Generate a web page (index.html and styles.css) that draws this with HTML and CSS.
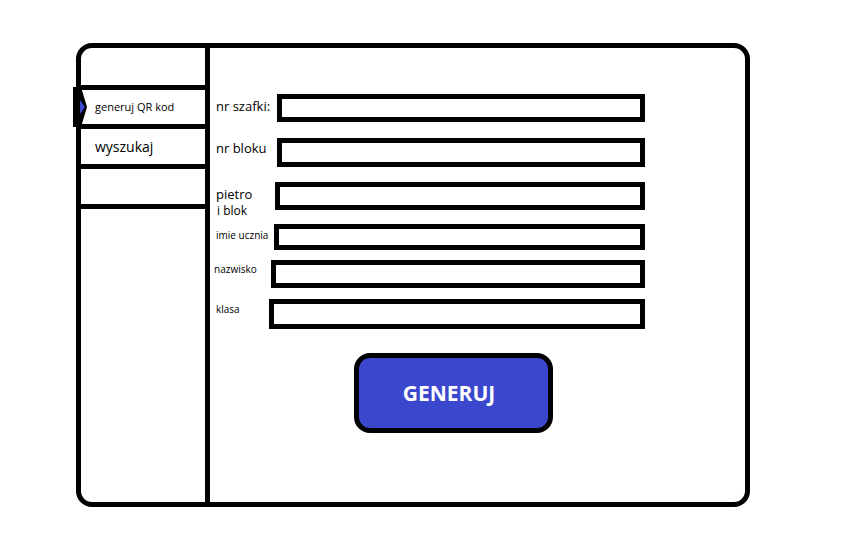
FILE: index.html
```html
<!DOCTYPE html>
<html lang="pl">
<head>
  <meta charset="UTF-8">
  <meta name="viewport" content="width=device-width, initial-scale=1.0">
  <title>Generator QR szafek</title>
  <link rel="stylesheet" href="styles.css">
</head>
<body>
  <div class="okno">

    <div class="menuBoczne">
      <div class="pozycja aktywna">
        <svg class="znacznik" width="15" height="40" viewBox="0 0 15 40">
          <polygon points="0,0 8,0 14,20 8,40 0,40" fill="#000000"/>
          <polygon points="7,13 12,20 7,27" fill="#3b47cc"/>
        </svg>
        <span class="tekstMaly">generuj QR kod</span>
      </div>
      <div class="pozycja">
        <span class="tekstDuzy">wyszukaj</span>
      </div>
      <div class="pozycja ostatnia"></div>
    </div>

    <div class="formularz">
      <div class="pole poleSzafka">
        <label class="etykieta">nr szafki:</label>
        <div class="ramka"></div>
      </div>

      <div class="pole poleBlok">
        <label class="etykieta">nr bloku</label>
        <div class="ramka"></div>
      </div>

      <div class="pole polePietro">
        <label class="etykieta">pietro<br/><span class="dopisek">i blok</span></label>
        <div class="ramka"></div>
      </div>

      <div class="pole poleImie">
        <label class="etykieta mala">imie ucznia</label>
        <div class="ramka"></div>
      </div>

      <div class="pole poleNazwisko">
        <label class="etykieta mala">nazwisko</label>
        <div class="ramka"></div>
      </div>

      <div class="pole poleKlasa">
        <label class="etykieta mala">klasa</label>
        <div class="ramka"></div>
      </div>

      <div class="btGeneruj">GENERUJ</div>
    </div>

  </div>
</body>
</html>
```

FILE: styles.css
```css
body {
  background-color: #ffffff;
  color: #000000;
  margin: 0;
  padding: 0;
  font-family: "Open Sans", "Liberation Sans", sans-serif;
}

.okno {
  box-sizing: border-box;
  width: 674px;
  height: 464px;
  margin: 43px 0 0 76px;
  border: 5px solid #000000;
  border-radius: 16px;
  display: flex;
}

.menuBoczne {
  width: 124px;
  padding-top: 37px;
  border-right: 5px solid #000000;
}

.pozycja {
  position: relative;
  box-sizing: border-box;
  height: 40px;
  border-top: 5px solid #000000;
  display: flex;
  align-items: center;
  padding-left: 14px;
}
.pozycja.aktywna {
  height: 39px;
}
.pozycja.ostatnia {
  height: 45px;
  border-bottom: 5px solid #000000;
}

.znacznik {
  position: absolute;
  left: -8px;
  top: -3px;
}

.tekstMaly {
  font-size: 11px;
  line-height: 14px;
}
.tekstDuzy {
  font-size: 14px;
  line-height: 16px;
}

.formularz {
  flex: 1;
  padding: 46px 0 0 6px;
}

.pole {
  display: flex;
  width: 429px;
  height: 28px;
}
.ramka {
  flex: 1;
  box-sizing: border-box;
  border: 5px solid #000000;
  background-color: #ffffff;
}

.etykieta {
  font-size: 13px;
  line-height: 16px;
  white-space: nowrap;
}
.etykieta.mala {
  font-size: 10px;
  line-height: 12px;
}
.dopisek {
  font-size: 12px;
  line-height: 14px;
  padding-left: 1px;
}

.poleSzafka .etykieta { width: 61px; padding-top: 4px; }
.poleBlok { margin-top: 16px; height: 29px; }
.poleBlok .etykieta { width: 61px; padding-top: 2px; }
.polePietro { margin-top: 15px; }
.polePietro .etykieta { width: 59px; padding-top: 4px; }
.poleImie { margin-top: 14px; height: 26px; }
.poleImie .etykieta { width: 58px; padding-top: 5px; }
.poleNazwisko { margin-top: 10px; }
.poleNazwisko .etykieta { width: 57px; padding-top: 3px; margin-left: -2px; }
.poleKlasa { margin-top: 11px; height: 30px; }
.poleKlasa .etykieta { width: 53px; padding-top: 4px; }

.btGeneruj {
  box-sizing: border-box;
  width: 199px;
  height: 80px;
  margin: 24px 0 0 138px;
  border: 5px solid #000000;
  border-radius: 16px;
  background-color: #3b47cc;
  color: #ffffff;
  font-size: 21px;
  font-weight: bold;
  display: flex;
  align-items: center;
  justify-content: center;
  padding-right: 9px;
}
```
